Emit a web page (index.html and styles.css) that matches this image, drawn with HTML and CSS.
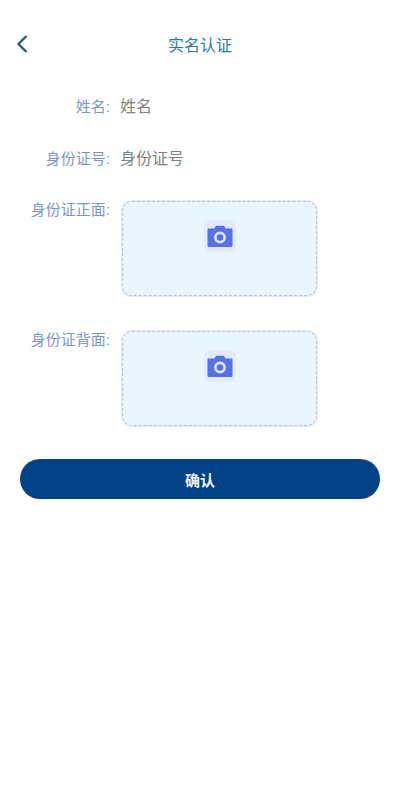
FILE: index.html
```html
<!DOCTYPE html>
<html lang="zh-CN">
<head>
    <meta charset="UTF-8">
    <meta name="viewport" content="width=device-width, initial-scale=1.0">
    <title>实名认证</title>
    <link rel="stylesheet" href="styles.css">
</head>
<body>
    <div class="header">
        <svg class="back" width="14" height="20" viewBox="0 0 14 20">
            <path d="M11.5 2 L3.5 10 L11.5 18" fill="none" stroke="#1f5288" stroke-width="2.2"/>
        </svg>
        <div class="title">实名认证</div>
    </div>

    <div class="form">
        <div class="form-row">
            <label>姓名:</label>
            <div class="value">姓名</div>
        </div>
        <div class="form-row">
            <label>身份证号:</label>
            <div class="value">身份证号</div>
        </div>
        <div class="form-row upload-row">
            <label>身份证正面:</label>
            <div class="upload">
                <div class="camera">
                    <svg width="26" height="22" viewBox="0 0 26 22">
                        <path d="M1.5 3.5 H7.5 L9 .8 H17 L18.5 3.5 H24.5 A1 1 0 0 1 25.5 4.5 V21 A1 1 0 0 1 24.5 22 H1.5 A1 1 0 0 1 .5 21 V4.5 A1 1 0 0 1 1.5 3.5 Z" fill="#5570e8"/>
                        <circle cx="13" cy="12.5" r="4.6" fill="#5570e8" stroke="#dfe8fb" stroke-width="2.6"/>
                    </svg>
                </div>
            </div>
        </div>
        <div class="form-row upload-row">
            <label>身份证背面:</label>
            <div class="upload">
                <div class="camera">
                    <svg width="26" height="22" viewBox="0 0 26 22">
                        <path d="M1.5 3.5 H7.5 L9 .8 H17 L18.5 3.5 H24.5 A1 1 0 0 1 25.5 4.5 V21 A1 1 0 0 1 24.5 22 H1.5 A1 1 0 0 1 .5 21 V4.5 A1 1 0 0 1 1.5 3.5 Z" fill="#5570e8"/>
                        <circle cx="13" cy="12.5" r="4.6" fill="#5570e8" stroke="#dfe8fb" stroke-width="2.6"/>
                    </svg>
                </div>
            </div>
        </div>
    </div>

    <button class="confirm">确认</button>
</body>
</html>
```

FILE: styles.css
```css
* {
    box-sizing: border-box;
}
body {
    margin: 0;
    background-color: #fff;
    font-family: "Liberation Sans", "Noto Sans CJK SC", sans-serif;
}
.header {
    display: flex;
    align-items: center;
    justify-content: center;
    position: relative;
    height: 40px;
    margin-top: 24px;
}
.back {
    position: absolute;
    left: 15px;
    top: 10px;
}
.title {
    font-size: 16px;
    color: #2a7ba6;
}
.form {
    display: flex;
    flex-direction: column;
    margin-top: 15px;
}
.form-row {
    display: flex;
    align-items: center;
    height: 52px;
}
.form-row label {
    width: 111px;
    padding-right: 1px;
    text-align: right;
    font-size: 15px;
    color: #7d94d3;
}
.value {
    margin-left: 9px;
    font-size: 16px;
    color: #808080;
}
.upload-row {
    align-items: flex-start;
    height: 97px;
    margin-top: 17px;
}
.upload-row + .upload-row {
    margin-top: 33px;
}
.upload-row label {
    line-height: 20px;
}
.upload {
    display: flex;
    justify-content: center;
    width: 195px;
    height: 95px;
    margin: 1px 0 0 11px;
    padding-top: 18px;
    background-color: #e9f5ff;
    border: 1px dashed #b5c2da;
    box-shadow: 0 0 0 1px #e1e8f4;
    border-radius: 10px;
}
.camera {
    display: flex;
    align-items: center;
    justify-content: center;
    width: 32px;
    height: 32px;
    background-color: #e1ebfc;
    border-radius: 6px;
}
.confirm {
    display: block;
    width: 360px;
    height: 40px;
    margin: 32px 20px 0;
    background-color: #004285;
    color: #eef4fb;
    border: none;
    border-radius: 20px;
    font-family: inherit;
    font-size: 15px;
    font-weight: bold;
}
```
